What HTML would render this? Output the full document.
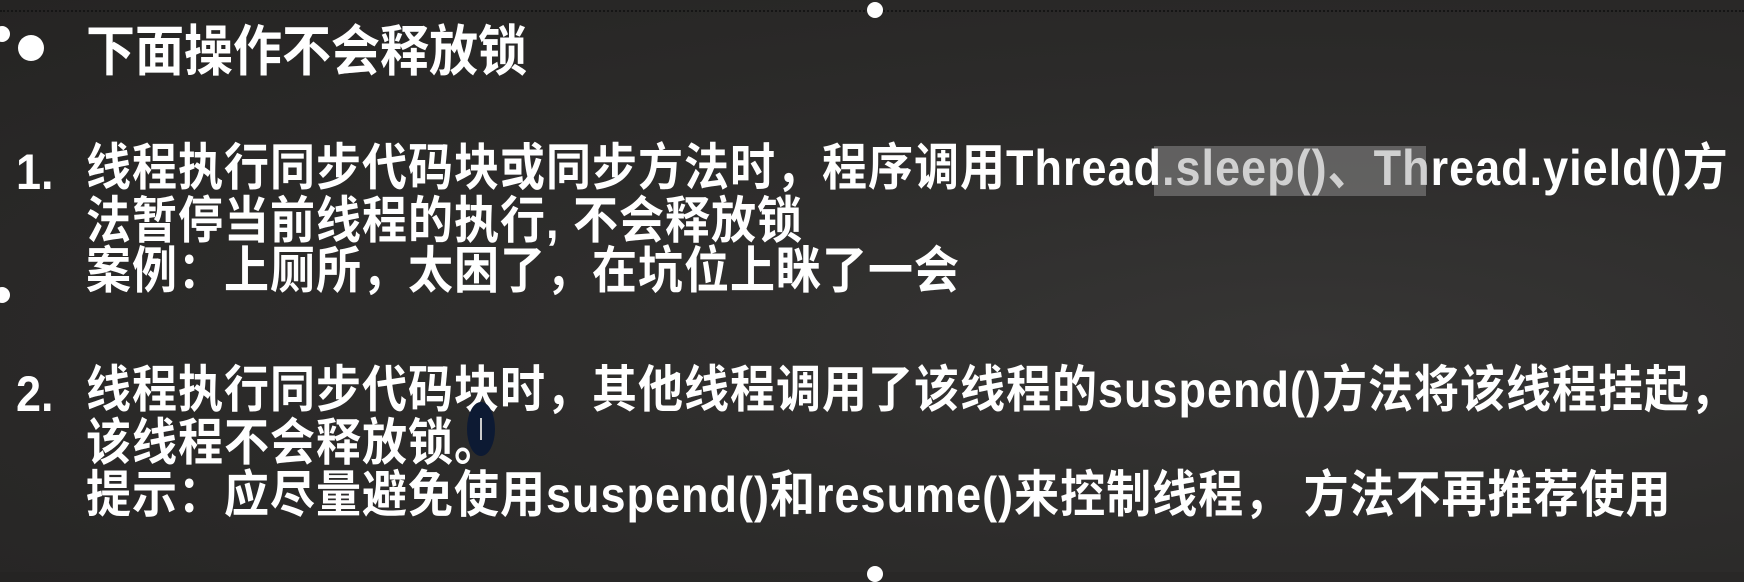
<!DOCTYPE html>
<html><head><meta charset="utf-8"><style>
html,body{margin:0;padding:0}
body{width:1744px;height:572px;overflow:hidden;position:relative;
background:radial-gradient(ellipse at 75% 60%,#363534 0%,#2d2c2b 45%,#252423 100%);
font-family:"Liberation Sans","Noto Sans CJK SC",sans-serif;font-weight:bold;color:#fff}
.t{position:absolute;white-space:nowrap;line-height:1;transform:scaleY(1.12);transform-origin:50% 50%}
.h{font-size:49px;left:86px;top:23px;font-family:"Noto Sans CJK SC",sans-serif;}
.l{font-size:45px;left:86px;letter-spacing:1px}
.n{font-size:45px;left:16px}
.dl{position:absolute;left:0;right:0;top:10px;border-top:2px dotted #151515}
.dot{position:absolute;width:16px;height:16px;border-radius:50%;background:#fff}
</style></head><body>
<div class="dl"></div>
<div class="dot" style="left:867px;top:2px"></div>
<div class="dot" style="left:-6px;top:26px"></div>
<div class="dot" style="left:-6px;top:287px"></div>
<div class="dot" style="left:867px;top:566px"></div>
<div style="position:absolute;left:1154px;top:146px;width:272px;height:50px;background:rgba(160,160,160,0.45)"></div>
<div style="position:absolute;left:18px;top:35px;width:26px;height:26px;border-radius:50%;background:#fff"></div>
<div class="t h">下面操作不会释放锁</div>
<div class="t n" style="top:149px">1.</div>
<div class="t l" style="top:145px">线程执行同步代码块或同步方法时，程序调用Thread<span style="color:#d0d0d0">.sleep()、Th</span>read.yield()方</div>
<div class="t l" style="top:198px">法暂停当前线程的执行, 不会释放锁</div>
<div class="t l" style="top:248px">案例：上厕所，太困了，在坑位上眯了一会</div>
<div class="t n" style="top:371px">2.</div>
<div class="t l" style="top:367px">线程执行同步代码块时，其他线程调用了该线程的suspend()方法将该线程挂起，</div>
<div class="t l" style="top:420px">该线程不会释放锁。</div>
<div class="t l" style="top:472px">提示：应尽量避免使用suspend()和resume()来控制线程， 方法不再推荐使用</div>
<div style="position:absolute;left:467px;top:402px;width:28px;height:54px;border-radius:50%;background:#0d1a33"></div>
<div style="position:absolute;left:480px;top:418px;width:2px;height:22px;background:#ccc"></div>
</body></html>
